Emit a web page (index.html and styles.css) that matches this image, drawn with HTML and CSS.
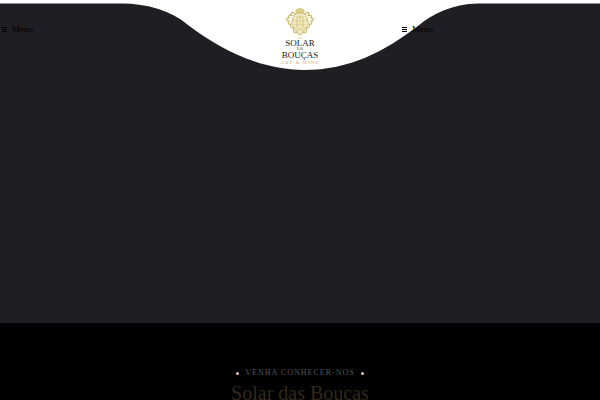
FILE: index.html
```html
<!DOCTYPE html>
<html lang="pt">
<head>
<meta charset="utf-8">
<meta name="viewport" content="width=device-width, initial-scale=1">
<title>Solar das Bouças</title>
<link rel="stylesheet" href="styles.css">
</head>
<body>
<header class="header">
  <svg class="header-curve" viewBox="0 0 600 72" preserveAspectRatio="none" aria-hidden="true">
    <path fill="#fff" d="M0 0H600V3.5H478C452 4 432 14 418 26C385 51 350 70 304 70C258 70 217 47 188 25C172 11 147 3.500 122 3.500H0Z"/>
  </svg>
  <div class="header-cell">
    <button class="menu" type="button">
      <svg class="menu-icon" viewBox="0 0 5 5" aria-hidden="true"><path d="M0 0H5V1H0ZM0 2H5V3H0ZM0 4H5V5H0Z" fill="currentColor"/></svg>
      Menu
    </button>
  </div>
  <a class="logo" href="#">
    <svg class="crest" viewBox="0 0 28 32" fill="none" stroke="#cdbb6c" stroke-linecap="round" aria-hidden="true">
      <path fill="#f1e8c5" stroke-width=".7" d="M8 8C10 5 18 5 20 8C22 12 23 17 20 21C18 25 16 27 14 28C12 27 10 25 8 21C5 17 6 12 8 8Z"/>
      <path d="M10 5C9 1 13 3 14 1C15 3 19 1 18 5ZM10 6H18" fill="#e2d08a" stroke-width=".8"/>
      <path stroke-width="1.200" d="M9 7C6 4 4 6 6 9C3 7 2 9 3 11C0 10 0 14 3 14C1 16 3 18 5 17C4 20 6 22 8 20C6 23 8 27 11 25M19 7C22 4 24 6 22 9C25 7 26 9 25 11C28 10 28 14 25 14C27 16 25 18 23 17C24 20 22 22 20 20C22 23 20 27 17 25"/>
      <path stroke-width=".7" d="M10 10H18M9 14H12M16 14H19M9 18H19M14 9V16M11 11V21M17 11V21M6 11L8 13L5 15M22 11L20 13L23 15M9 22L12 24L14 21L16 24L19 22M11 26L14 28L17 26M12 31H16"/>
    </svg>
    <span class="logo-name">SOLAR</span>
    <span class="logo-das">DAS</span>
    <span class="logo-name">BOUÇAS</span>
    <span class="logo-tag">ART &amp; WINE</span>
  </a>
  <div class="header-cell">
    <button class="menu" type="button">
      <svg class="menu-icon" viewBox="0 0 5 5" aria-hidden="true"><path d="M0 0H5V1H0ZM0 2H5V3H0ZM0 4H5V5H0Z" fill="currentColor"/></svg>
      Menu
    </button>
  </div>
</header>
<main>
  <section class="hero"></section>
  <section class="intro">
    <p class="eyebrow">VENHA CONHECER-NOS</p>
    <h1 class="title">Solar das Bouças</h1>
  </section>
</main>
</body>
</html>
```
FILE: styles.css
```css
* {
  box-sizing: border-box;
}

body {
  margin: 0;
  background: #000;
  font-family: "Liberation Serif", serif;
}

.header {
  position: relative;
  display: grid;
  grid-template-columns: repeat(3, 1fr);
  height: 72px;
  background: #1f1e23;
}

.header-curve {
  position: absolute;
  inset: 0;
  width: 100%;
  height: 100%;
}

.header-cell {
  position: relative;
  padding: 24px 2px;
}

.menu {
  display: flex;
  align-items: center;
  gap: 5px;
  padding: 0;
  border: 0;
  background: none;
  color: #000;
  font: 9px/11px "Liberation Serif", serif;
}

.menu-icon {
  width: 5px;
  height: 5px;
}

.logo {
  position: relative;
  display: flex;
  flex-direction: column;
  align-items: center;
  padding-top: 7px;
  color: #17171b;
  text-decoration: none;
  white-space: nowrap;
}

.crest {
  width: 28px;
  height: 32px;
}

.logo-name {
  font-size: 9px;
  line-height: 9px;
}

.logo-das {
  font-size: 3px;
  line-height: 3px;
}

.logo-tag {
  color: #c9a968;
  font-size: 5px;
  line-height: 6px;
  letter-spacing: 1px;
}

.hero {
  height: 251px;
  background: #1f1e23;
}

.intro {
  padding-top: 44px;
  text-align: center;
}

.eyebrow {
  display: flex;
  align-items: center;
  justify-content: center;
  gap: 6px;
  margin: 0;
  color: #555;
  font-size: 8px;
  line-height: 12px;
  letter-spacing: 1px;
}

.eyebrow::before,
.eyebrow::after {
  content: "";
  width: 3px;
  height: 3px;
  border-radius: 50%;
  background: #e0c4ae;
}

.title {
  margin: 0;
  color: #32281a;
  font-size: 20px;
  font-weight: 400;
  line-height: 28px;
}
```
